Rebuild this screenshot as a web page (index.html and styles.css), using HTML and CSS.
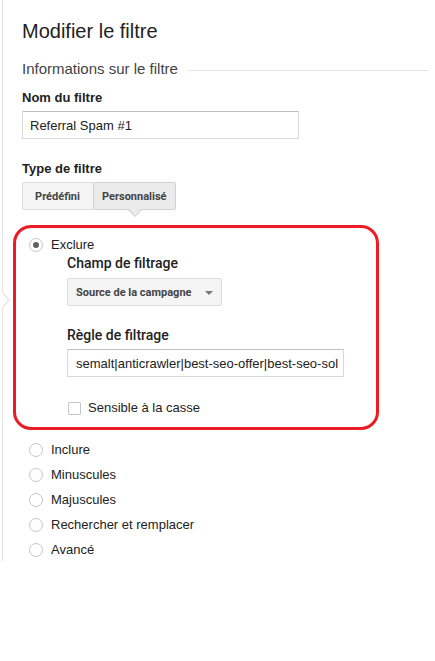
FILE: index.html
```html
<!DOCTYPE html>
<html lang="fr">
<head>
    <meta charset="UTF-8">
    <meta name="viewport" content="width=device-width, initial-scale=1.0">
    <title>Modifier le filtre</title>
    <link rel="stylesheet" href="styles.css">
</head>
<body>
    <div class="panel">
        <h1 class="title">Modifier le filtre</h1>
        <div class="section-head"><span>Informations sur le filtre</span></div>

        <label class="field-label" for="filterName">Nom du filtre</label>
        <input class="text-input" id="filterName" type="text" value="Referral Spam #1">

        <div class="field-label type-label">Type de filtre</div>
        <div class="toggle">
            <button class="toggle-btn">Prédéfini</button>
            <button class="toggle-btn selected">Personnalisé</button>
        </div>

        <div class="filter-box">
            <div class="radio-row"><span class="radio checked"></span>Exclure</div>
            <div class="exclude-options">
                <div class="sub-label">Champ de filtrage</div>
                <div class="select">Source de la campagne<span class="caret"></span></div>
                <div class="sub-label rule-label">Règle de filtrage</div>
                <input class="text-input rule-input" type="text" value="semalt|anticrawler|best-seo-offer|best-seo-sol">
                <div class="check-row"><span class="checkbox"></span>Sensible à la casse</div>
            </div>
        </div>

        <div class="radio-list">
            <div class="radio-row"><span class="radio"></span>Inclure</div>
            <div class="radio-row"><span class="radio"></span>Minuscules</div>
            <div class="radio-row"><span class="radio"></span>Majuscules</div>
            <div class="radio-row"><span class="radio"></span>Rechercher et remplacer</div>
            <div class="radio-row"><span class="radio"></span>Avancé</div>
        </div>
    </div>
</body>
</html>
```

FILE: styles.css
```css
body {
    margin: 0;
    font-family: "Liberation Sans", Arial, sans-serif;
    font-size: 13px;
    color: #222;
    background: #fff;
}

.panel {
    position: relative;
    margin-left: 2px;
    padding: 19px 6px 3px 19px;
    border-left: 1px solid #e5e5e5;
}

/* little notch pointing at the list on the left */
.panel::before,
.panel::after {
    content: "";
    position: absolute;
    top: 292px;
    width: 0;
    height: 0;
    border-style: solid;
    border-color: transparent;
}

.panel::before {
    left: 0;
    border-width: 8px 0 8px 7px;
    border-left-color: #e5e5e5;
}

.panel::after {
    left: -1px;
    top: 293px;
    border-width: 7px 0 7px 6px;
    border-left-color: #fff;
}

.title {
    margin: 0;
    font-size: 20px;
    font-weight: normal;
    line-height: 24px;
    color: #222;
}

.section-head {
    display: flex;
    align-items: center;
    margin-top: 17px;
    font-size: 15px;
    line-height: 18px;
    color: #444;
}

.section-head::after {
    content: "";
    flex: 1;
    margin: 2px 0 0 10px;
    border-top: 1px solid #e5e5e5;
}

.field-label {
    display: block;
    margin-top: 12px;
    font-weight: bold;
    line-height: 16px;
    color: #222;
}

.type-label {
    margin-top: 22px;
}

.text-input {
    display: block;
    box-sizing: border-box;
    width: 277px;
    height: 28px;
    margin-top: 5px;
    padding: 0 7px;
    border: 1px solid #d9d9d9;
    border-top-color: #c0c0c0;
    border-radius: 1px;
    font-family: "Liberation Sans", Arial, sans-serif;
    font-size: 13px;
    color: #222;
    outline: none;
}

.toggle {
    display: flex;
    margin-top: 5px;
}

.toggle-btn {
    position: relative;
    box-sizing: border-box;
    min-width: 72px;
    height: 28px;
    padding: 0 9px 0 8px;
    border: 1px solid #dcdcdc;
    border-radius: 2px;
    background: #f5f5f5;
    font-family: Roboto, "Liberation Sans", sans-serif;
    font-size: 11px;
    font-weight: bold;
    color: #444;
}

.toggle-btn + .toggle-btn {
    margin-left: -1px;
}

.toggle-btn.selected {
    background: #ebebeb;
    border-color: #d0d0d0;
}

.toggle-btn.selected::before,
.toggle-btn.selected::after {
    content: "";
    position: absolute;
    left: 50%;
    width: 0;
    height: 0;
    border-style: solid;
    border-color: transparent;
}

.toggle-btn.selected::before {
    top: 27px;
    margin-left: -7px;
    border-width: 7px 7px 0 7px;
    border-top-color: #d0d0d0;
}

.toggle-btn.selected::after {
    top: 26px;
    margin-left: -6px;
    border-width: 7px 6px 0 6px;
    border-top-color: #ebebeb;
}

.filter-box {
    box-sizing: border-box;
    width: 366px;
    margin: 15px 0 0 -9px;
    padding: 9px 0 11px 13px;
    border: 3px solid #ec1c24;
    border-radius: 18px;
}

.radio-row {
    display: flex;
    align-items: center;
    gap: 8px;
    height: 16px;
    line-height: 16px;
    color: #222;
}

.radio {
    box-sizing: border-box;
    width: 14px;
    height: 14px;
    border: 1px solid #c6c6c6;
    border-radius: 50%;
    background: #fff;
    display: flex;
    align-items: center;
    justify-content: center;
}

.radio.checked::after {
    content: "";
    width: 6px;
    height: 6px;
    border-radius: 50%;
    background: #606060;
}

.exclude-options {
    margin-left: 38px;
}

.sub-label {
    margin-top: 2px;
    font-family: Roboto, "Liberation Sans", sans-serif;
    font-size: 14px;
    font-weight: 500;
    line-height: 16px;
    color: #222;
}

.rule-label {
    margin-top: 21px;
}

.select {
    display: flex;
    align-items: center;
    justify-content: space-between;
    box-sizing: border-box;
    width: 155px;
    height: 28px;
    margin-top: 7px;
    padding: 0 8px 0 8px;
    border: 1px solid #dcdcdc;
    border-radius: 2px;
    background: #f5f5f5;
    font-family: Roboto, "Liberation Sans", sans-serif;
    font-size: 11px;
    font-weight: bold;
    color: #444;
}

.caret {
    width: 0;
    height: 0;
    margin-top: 2px;
    border-style: solid;
    border-width: 4px 4px 0 4px;
    border-color: #777 transparent transparent transparent;
}

.rule-input {
    margin-top: 6px;
    padding: 0 1px 0 8px;
}

.check-row {
    display: flex;
    align-items: center;
    gap: 7px;
    height: 16px;
    margin-top: 23px;
    margin-left: 1px;
    line-height: 16px;
}

.checkbox {
    box-sizing: border-box;
    width: 13px;
    height: 13px;
    border: 1px solid #c6c6c6;
    border-radius: 1px;
    background: #fff;
}

.radio-list {
    display: flex;
    flex-direction: column;
    gap: 9px;
    margin: 12px 0 0 7px;
}
```
